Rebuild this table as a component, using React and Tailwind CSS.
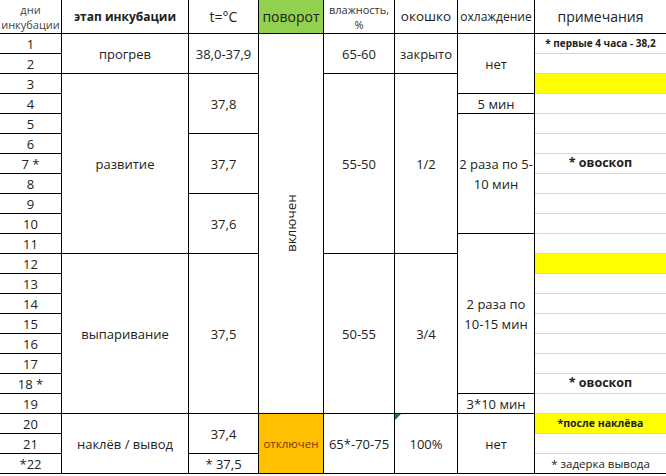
// Incubation schedule table (Excel-like sheet)
const H = { 1: "h-5", 2: "h-10", 3: "h-15", 6: "h-30", 8: "h-40", 9: "h-45", 19: "h-95" };

const columns = [
  {
    w: "w-[62px]",
    cells: [
      ["1", 1], ["2", 1], ["3", 1], ["4", 1], ["5", 1], ["6", 1], ["7 *", 1], ["8", 1],
      ["9", 1], ["10", 1], ["11", 1], ["12", 1], ["13", 1], ["14", 1], ["15", 1], ["16", 1],
      ["17", 1], ["18 *", 1], ["19", 1], ["20", 1], ["21", 1], ["*22", 1],
    ],
  },
  {
    w: "w-[127px]",
    cells: [["прогрев", 2], ["развитие", 9], ["выпаривание", 8], ["наклёв / вывод", 3]],
  },
  {
    w: "w-[70px]",
    cells: [["38,0-37,9", 2], ["37,8", 3], ["37,7", 3], ["37,6", 3], ["37,5", 8], ["37,4", 2], ["* 37,5", 1]],
  },
  { w: "w-[65px]", turn: true },
  {
    w: "w-[71px]",
    cells: [["65-60", 2], ["55-50", 9], ["50-55", 8], ["65*-70-75", 3]],
  },
  {
    w: "w-[63px]",
    cells: [["закрыто", 2], ["1/2", 9], ["3/4", 8], ["100%", 3, true]],
  },
  {
    w: "w-[77px]",
    cells: [
      ["нет", 3], ["5 мин", 1], [["2 раза по 5-", "10 мин"], 6], [["2 раза по", "10-15 мин"], 8],
      ["3*10 мин", 1], ["нет", 3],
    ],
  },
];

const notes = {
  1: { text: "* первые 4 часа - 38,2", cls: "font-bold text-[10px]" },
  3: { yellow: true },
  7: { text: "* овоскоп", cls: "font-bold text-[12.5px]" },
  12: { yellow: true },
  18: { text: "* овоскоп", cls: "font-bold text-[12.5px]" },
  20: { text: "*после наклёва", cls: "font-bold text-[10.5px]", yellow: true },
  22: { text: "* задерка вывода", cls: "text-[11.5px]" },
};

const days = Array.from({ length: 22 }, (_, i) => i + 1);

export default function App() {
  return (
    <div className="h-[476px] w-[666px] overflow-hidden bg-white font-['Open_Sans',sans-serif] text-[13px] text-[#222]">
      {/* header */}
      <div className="flex h-[34px] border-b border-black">
        <div className="flex w-[62px] flex-col items-center justify-center border-r border-black text-[11px] leading-[15px] text-[#444]">
          <span>дни</span>
          <span>инкубации</span>
        </div>
        <div className="flex w-[127px] items-center justify-center border-r border-black text-[12px] font-bold">
          этап инкубации
        </div>
        <div className="flex w-[70px] items-center justify-center border-r border-black text-[14px]">
          t=°C
        </div>
        <div className="flex w-[65px] items-center justify-center border-r border-black bg-[#92d050] text-[14px]">
          поворот
        </div>
        <div className="flex w-[71px] flex-col items-center justify-center border-r border-black text-[11px] leading-[15px] text-[#333]">
          <span>влажность,</span>
          <span>%</span>
        </div>
        <div className="flex w-[63px] items-center justify-center border-r border-black text-[13.5px]">
          окошко
        </div>
        <div className="flex w-[77px] items-center justify-center border-r border-black text-[12px]">
          охлаждение
        </div>
        <div className="flex flex-1 items-center justify-center text-[14px]">примечания</div>
      </div>

      {/* body */}
      <div className="flex">
        {columns.map((col, ci) =>
          col.turn ? (
            <div key={ci} className={`${col.w} flex flex-col border-r border-black`}>
              <div className="flex h-95 items-center justify-center border-b border-black">
                <span className="-rotate-90 whitespace-nowrap text-[13.5px]">включен</span>
              </div>
              <div className="flex h-15 items-center justify-center border-b border-black bg-[#ffc000] text-[11.5px] text-[#7a3410]">
                отключен
              </div>
            </div>
          ) : (
            <div key={ci} className={`${col.w} flex flex-col border-r border-black`}>
              {col.cells.map(([label, span, mark], i) => (
                <div
                  key={i}
                  className={`relative flex ${H[span]} flex-col items-center justify-center border-b border-black text-center leading-[20px]`}
                >
                  {mark && (
                    <svg className="absolute left-0 top-0" width="6" height="6" viewBox="0 0 6 6">
                      <polygon points="0,0 6,0 0,6" fill="#217346" />
                    </svg>
                  )}
                  {Array.isArray(label)
                    ? label.map((l) => (
                        <span key={l} className="whitespace-nowrap">
                          {l}
                        </span>
                      ))
                    : label}
                </div>
              ))}
            </div>
          )
        )}

        {/* notes column */}
        <div className="flex flex-1 flex-col">
          {days.map((d) => {
            const n = notes[d] || {};
            return (
              <div
                key={d}
                className={`flex h-5 items-center justify-center border-b ${
                  d === 22 ? "border-black" : "border-[#d4d4d4]"
                } ${n.yellow ? "bg-[#ffff00]" : ""} ${n.cls || ""}`}
              >
                {n.text}
              </div>
            );
          })}
        </div>
      </div>
    </div>
  );
}
